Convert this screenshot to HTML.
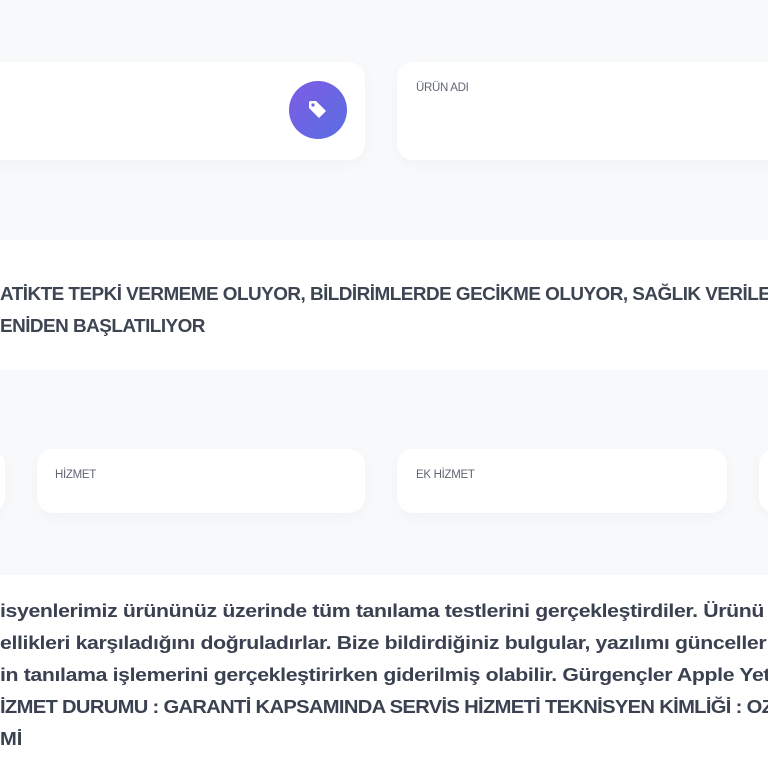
<!DOCTYPE html>
<html><head><meta charset="utf-8"><style>
html,body{margin:0;padding:0;width:768px;height:768px;overflow:hidden;background:#f8f9fa;font-family:"Liberation Sans",sans-serif;}
.abs{position:absolute}
.card{position:absolute;background:#fff;border-radius:16px;box-shadow:0 4px 14px rgba(0,0,0,0.03);}
.lbl{position:absolute;font-size:11.5px;color:#5f6673;letter-spacing:-0.3px}
.t{position:absolute;left:0;white-space:nowrap;color:#3a4150;font-weight:bold;transform-origin:0 0;}
</style></head><body>
<div class="card" style="left:-20px;top:62px;width:385px;height:98px"></div>
<div class="abs" style="left:289px;top:81px;width:58px;height:58px;border-radius:50%;background:linear-gradient(135deg,#7d5ce6,#5a6ee0)"></div>
<svg class="abs" style="left:306px;top:98px" width="24" height="24" viewBox="0 0 24 24"><path d="M3 4 L3 10 L13 20 L20 13 L10 3 L4 3 Z" fill="#fff"/><circle cx="7" cy="7" r="1.6" fill="#6a62e3"/></svg>
<div class="card" style="left:397px;top:62px;width:400px;height:98px"></div>
<div class="lbl" style="left:416px;top:82px">ÜRÜN ADI</div>

<div class="abs" style="left:0;top:240px;width:768px;height:130px;background:#fff"></div>
<div class="t" style="top:282px;font-size:18px;line-height:24px;color:#3d4452;letter-spacing:-0.5px;transform:scaleX(1.05)">ATİKTE TEPKİ VERMEME OLUYOR, BİLDİRİMLERDE GECİKME OLUYOR, SAĞLIK VERİLE</div>
<div class="t" style="top:314px;font-size:18px;line-height:24px;color:#3d4452;letter-spacing:-0.5px;transform:scaleX(1.05)">ENİDEN BAŞLATILIYOR</div>

<div class="card" style="left:-40px;top:449px;width:45px;height:64px"></div>
<div class="card" style="left:37px;top:449px;width:328px;height:64px"></div>
<div class="lbl" style="left:55px;top:469px">HİZMET</div>
<div class="card" style="left:397px;top:449px;width:330px;height:64px"></div>
<div class="lbl" style="left:416px;top:469px">EK HİZMET</div>
<div class="card" style="left:759px;top:449px;width:40px;height:64px"></div>

<div class="abs" style="left:0;top:575px;width:768px;height:193px;background:#fff"></div>
<div class="t" style="top:599px;font-size:18px;line-height:24px;letter-spacing:-0.3px;transform:scaleX(1.18)">isyenlerimiz ürününüz üzerinde tüm tanılama testlerini gerçekleştirdiler. Ürünü</div>
<div class="t" style="top:631px;font-size:18px;line-height:24px;letter-spacing:-0.3px;transform:scaleX(1.18)">ellikleri karşıladığını doğruladırlar. Bize bildirdiğiniz bulgular, yazılımı günceller</div>
<div class="t" style="top:663px;font-size:18px;line-height:24px;letter-spacing:-0.3px;transform:scaleX(1.18)">in tanılama işlemerini gerçekleştirirken giderilmiş olabilir. Gürgençler Apple Yet</div>
<div class="t" style="top:695px;font-size:18px;line-height:24px;letter-spacing:-0.6px;transform:scaleX(1.12)">İZMET DURUMU : GARANTİ KAPSAMINDA SERVİS HİZMETİ TEKNİSYEN KİMLİĞİ : OZ</div>
<div class="t" style="top:727px;font-size:18px;line-height:24px;transform:scaleX(1.12)">Mİ</div>
</body></html>
